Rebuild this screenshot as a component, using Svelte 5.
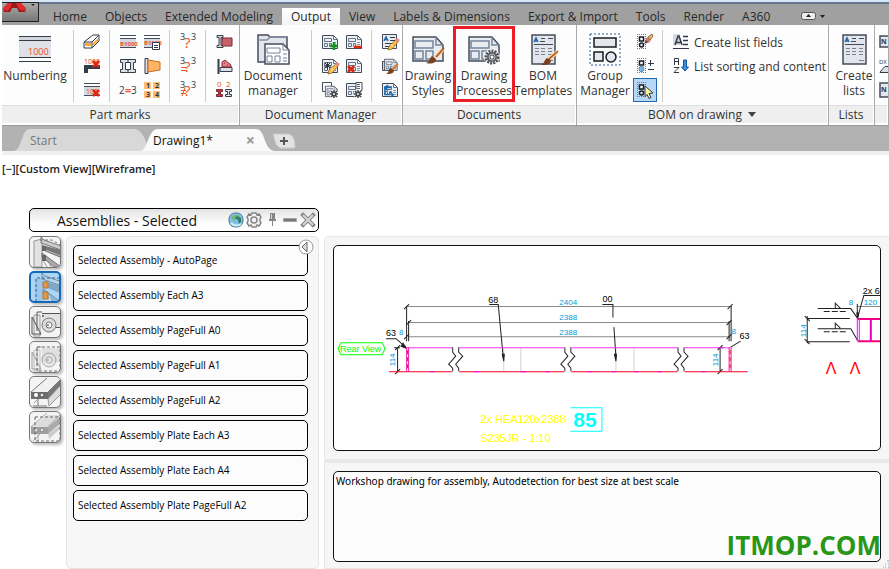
<script lang="ts">
	const sheet = '<path d="M.5 1.500h11l4 4v9H.5z" fill="#eceff3" stroke="#454c59"/><path d="M2.500 4.500h7v3h-7zM2.500 9.500h3v3h-3zM7.500 9.500h2v3h-2zM11.500 1.500v4h4" stroke="#68758a"/><path d="M11 8.500h3M11 10.500h3M11 12.500h3" stroke="#8a96a8"/>';
	const gearSmall = '<circle cx="12" cy="12" r="4.500" fill="#fff"/><path d="M12 8v8M8 12h8M9 9l6 6M15 9l-6 6" stroke="#3f4349" stroke-width="1.500"/><circle cx="12" cy="12" r="2.500" fill="#3f4349"/><circle cx="12" cy="12" r="1" fill="#fff"/>';
	const pencil = '<path d="M15 5l-8 7-1 4 4-1 7-8z" fill="#ffbf3d" stroke="#74512a" stroke-width=".7"/><path d="M9 10l2 3" stroke="#fff2c0"/><path d="M13 6l2-2 3 2-3 3z" fill="#e68c84"/>';
	const brush = '<path d="M16 6l-5 5" stroke="#d8742a" stroke-width="2"/><path d="M8 10l4 2c0 4-4 4-8 4 3-1 2-4 4-6z" fill="#7a401c"/>';
	const redX = '<path d="M6 7l6 6M12 7l-6 6" stroke="#e02810" stroke-width="2.500"/>';
	const beams = '<path d="M0 1.500h16M0 4.500h16M0 13.500h16" stroke="#454c59"/><path d="M0 5h16v8H0z" fill="#d5d9e1"/>';
	const iBeam = '<path d="M1 1.500h6v2H5v8h2v2H1v-2h2v-8H1z" fill="#dce0e7" stroke="#353c48"/>';
	const bigSheet = '<path d="M1 3h23l7 8v16H1z" fill="#e9ecf1" stroke="#454c59" stroke-width="1.500"/><path d="M3 7h18v7H3zM3 17h8v8H3zM14 17h7v8h-7zM24 3v8h7" stroke="#74849c" stroke-width="1.500"/>';
	const bigList = '<path d="M5 1h23v29H5z" fill="#e2e5eb" stroke="#454c59" stroke-width="1.500"/><path d="M7 8l2-4 2 4M8 7h3" stroke="#2567ae" stroke-width="1.500"/><path d="M14 4.500h4M13 7.500h5M21 4.500h5M7 10.500h19" stroke="#454c59"/><path d="M8 14.500h4M14 14.500h4M21 14.500h4M8 17.500h4M14 17.500h4M21 17.500h4M8 20.500h4M14 20.500h4M21 20.500h4M21 26.500h5" stroke="#7d828a"/>';
	const compareMarks = '<g fill="#303b4b" font-size="9"><text x="0" y="6">3</text><text x="11" y="6">3</text></g><text x="4" y="14" font-size="15" fill="#ed5422">?</text>';
	const group = '<path d="M0 .5h9M0 14.500h9M.5 0v15M8.500 0v15" stroke="#687a98" stroke-dasharray="1 1"/><path d="M2.500 3h4v4h-4z" fill="#fff" stroke="#171b22" stroke-width="1.500"/><circle cx="4.500" cy="11" r="2" fill="#e5e9f0" stroke="#171b22" stroke-width="1.500"/>';
	const crane = '<path d="M4 8h6v21H4z" fill="#ededed" stroke="#999"/><circle cx="19" cy="18" r="7" fill="#dcdcdc" stroke="#777"/><circle cx="19" cy="18" r="3" fill="#f6f6f6" stroke="#777"/><circle cx="18" cy="18" r="1" fill="#777"/>';

	const icons: Record<string, string> = {
		numbering: '<path d="M0 6h32v17H0z" fill="#dfe1e6"/><path d="M0 2.500h32M0 6.500h32M0 23.500h32M0 27.500h32" stroke="#343c49"/><path d="M0 3h32v3H0z" fill="#d3d6df"/><text x="9" y="21" font-size="9" fill="#ee4c17">1000</text>',
		eraser: '<path d="M0 8L9 1h6v6L8 14H0z" fill="#fff" stroke="#343c49"/><path d="M0 8h8l7-7M8 8v6" stroke="#343c49"/><path d="M1 9h6v3H1zM9 9l5-5v3l-5 5z" fill="#ffa63a"/>',
		clearNumber: '<text x="0" y="6" font-size="7" fill="#e14619">1000</text><path d="M2 15V9h14" stroke="#343c49" stroke-width="4"/><g transform="translate(3 -4)">' + redX + '</g>',
		removeNumber: beams + '<text x="2" y="12" font-size="7" fill="#e14619">100</text><g transform="translate(3 1)">' + redX + '</g>',
		mark: beams + '<text x="0" y="12" font-size="6" font-weight="bold" fill="#ed5422">B1000</text>',
		markList: beams + '<text x="0" y="11" font-size="6" font-weight="bold" fill="#ed5422">B1000</text><path d="M8.500 8.500h7v7h-7z" fill="#fff" stroke="#343c49"/><path d="M10 11.500h4M10 13.500h4" stroke="#343c49"/>',
		profiles: '<path d="M.5 1.500h15v3h-2v7h2v3H.5v-3h2v-7h-2z" fill="#dce0e7" stroke="#353c48"/><path d="M5.500 4.500h5v7h-5z" fill="#fff" stroke="#353c48"/><path d="M8 1v3M8 12v3" stroke="#353c48"/>',
		plate: '<path d="M1 .5h3v15H1z" fill="#dce0e7" stroke="#343c49"/><path d="M4 2l12 2v8L4 14z" fill="#ffb363" stroke="#c87022"/>',
		equal: '<text x="-1" y="12" font-size="10" fill="#303846">2</text><text x="5" y="12" font-size="11" font-weight="bold" fill="#ed5422">=</text><text x="11" y="12" font-size="10" fill="#303846">3</text>',
		numbers: '<path d="M0 0h7v7H0zM9 0h7v7H9zM0 9h7v7H0zM9 9h7v7H9z" fill="#ffbd73"/><g font-size="7" font-weight="bold" fill="#303846"><text x="2" y="6">1</text><text x="11" y="6">2</text><text x="2" y="15">3</text><text x="11" y="15">4</text></g>',
		compare: compareMarks,
		compareEqual: compareMarks + '<path d="M1 9.500h5M1 12.500h5" stroke="#ed5422"/>',
		compareDiff: compareMarks + '<path d="M1 8.500h5M1 11.500h5M5 6l-3 8" stroke="#ed5422"/>',
		flange: iBeam + '<path d="M6 4h10v8H6z" fill="#c9606a" stroke="#742d34"/>',
		cleat: '<path d="M2.500 1v15" stroke="#343c49" stroke-width="2"/><path d="M4 9.500h12v4H4z" fill="#dce0e7" stroke="#343c49"/><path d="M6 9V4l3-2 6 5v2z" fill="#dc828a" stroke="#8b2630"/><path d="M8 5h1M11 7h1" stroke="#8b2630"/>',
		beamNumbers: '<g font-size="8" fill="#ed5422"><text x="1" y="5">0</text><text x="10" y="5">2</text></g><path d="M.5 7.500h6v2h-2v3h2v2h-6v-2h2v-3h-2z" fill="#c93740" stroke="#762931"/><path d="M9.500 7.500h6v2h-2v3h2v2h-6v-2h2v-3h-2z" fill="#dce0e7" stroke="#353c48"/>',
		folder: '<path d="M1 28V1h10l2 2h17v25z" fill="#e2e5eb" stroke="#454c59" stroke-width="1.500"/><path d="M1 6h9l3-3h17" stroke="#8592a6" stroke-width="1.500"/><path d="M8 10h18l6 6v14H8z" fill="#fff" stroke="#454c59" stroke-width="1.500"/><path d="M10 14h13v5H10zM10 22h5v6h-5zM18 22h5v6h-5zM26 10v6h6M26 20h4M26 24h4M26 27h4" stroke="#74849c"/>',
		docAdd: sheet + '<path d="M12 8v8M8 12h8" stroke="#169222" stroke-width="2.500"/>',
		docMinus: sheet + '<path d="M8 13h8" stroke="#e02810" stroke-width="2.500"/>',
		docEdit: sheet + '<path d="M2 8h7M5.500 4.500v7M3 5l5 5M8 5l-5 5" stroke="#252c36"/>' + pencil,
		docDelete: sheet + '<g transform="translate(-4 1)">' + redX + '</g>',
		docsGear: '<path d="M.5.500h9v9h-9z" fill="#fff" stroke="#454c59"/><g transform="translate(3 3) scale(.8)">' + sheet + '</g>' + gearSmall,
		docGear: sheet + '<path d="M10 .5h6v8h-6z" fill="#fff" stroke="#454c59"/><path d="M11 2.500h3M11 4.500h3M11 6.500h3" stroke="#586579"/>' + gearSmall,
		textEdit: '<path d="M.5.500h14v14H.5z" fill="#e8ebf0" stroke="#454c59"/><path d="M2 7l2-4 2 4M3 5.500h3" stroke="#2567ae" stroke-width="1.500"/><path d="M8 3.500h5M8 6.500h5M3 9.500h7M3 12.500h4" stroke="#343c49"/>' + pencil,
		docBrush: '<path d="M.5 3.500h9v9h-9z" fill="#dce0e7" stroke="#454c59"/><g transform="translate(2 0) scale(.85)">' + sheet + '</g>' + brush,
		docSwap: sheet + '<path d="M9 5.500H3v7h5M6 3L3 5.500l3 3M8 10l3 3-3 2" stroke="#126db9" stroke-width="1.500"/>',
		drawingStyles: bigSheet + '<path d="M31 15l-7 8" stroke="#ffd09a" stroke-width="4"/><path d="M32 14l-8 9" stroke="#a64d1c" stroke-width="1.500"/><path d="M20 22l4 3c0 5-6 5-10 4 4-1 3-4 6-7z" fill="#7a401c"/>',
		drawingProcesses: bigSheet + '<circle cx="24" cy="23" r="8" fill="#fff"/><circle cx="24" cy="23" r="6" stroke="#50545a" stroke-width="3" stroke-dasharray="2 1"/><circle cx="24" cy="23" r="5" fill="#555960"/><circle cx="24" cy="23" r="3" stroke="#b9bec5"/><circle cx="24" cy="23" r="1.500" fill="#fff"/>',
		bomTemplates: bigList + '<path d="M30 18l-8 7" stroke="#ffd09a" stroke-width="4"/><path d="M31 17l-9 8" stroke="#a64d1c" stroke-width="1.500"/><path d="M20 24l4 2c0 5-6 5-10 5 4-2 3-5 6-7z" fill="#7a401c"/>',
		groupManager: '<path d="M1 0h30v31H1z" stroke="#2b5d9d" stroke-dasharray="2 2"/><path d="M5 4h22v9H5zM5 18h9v9H5z" fill="#e4e8ed" stroke="#171b22" stroke-width="1.500"/><circle cx="22" cy="23" r="5" fill="#e4e8ed" stroke="#171b22" stroke-width="1.500"/>',
		groupEdit: group + '<path d="M7 10l2-4 3 2z" fill="#43413a"/><path d="M8 5l3-2 3 3-2 3z" fill="#db7868"/><path d="M11 3l4-3 1 2-3 4z" fill="#e5bf5e" stroke="#8c7042"/>',
		groupItems: group + '<path d="M13.500 2v6M11 5.500h6M11 11.500h6" stroke="#303846"/><circle cx="4.500" cy="11" r="2.500" fill="#73b5ee"/>',
		groupPick: group + '<path d="M8 4l8 7-4 .5 2 4-2 1-2-4-2 2z" fill="#fff1a0" stroke="#303846"/>',
		listFields: '<path d="M0 0h7v11H0z" fill="#d4dae5"/><path d="M0 14.500h16" stroke="#303846"/><path d="M2 11L5 2h1l3 9M3 8.500h5" stroke="#303846" stroke-width="1.500"/><path d="M10 2.500h5M10 6.500h5M10 10.500h5" stroke="#303846" stroke-width="1.500"/>',
		listSort: '<path d="M1.500 7V.5h4V7M1 3.500h5M1 9.500h5l-5 5h5" stroke="#303846"/><path d="M10.500 2h3v7h2l-3.500 4-3.500-4h2z" fill="#3590df" stroke="#1853a3"/>',
		createLists: bigList,
		number: '<path d="M1 2h16v11H1z" fill="#e5e8ef" stroke="#454c59" stroke-width="1.500"/><text x="2" y="10" font-size="7" font-weight="bold" fill="#303846">N</text>',
		dx: '<text x="0" y="6" font-size="6" fill="#303846">DX</text><path d="M1 14.500h15v-3l-3-3H6l-3 3z" fill="#d8dce4" stroke="#343c49"/>',
		ncSettings: '<path d="M1 1h16v14H1z" fill="#e5e8ef" stroke="#454c59" stroke-width="1.500"/><text x="2" y="10" font-size="7" font-weight="bold" fill="#303846">N</text>',
		frame: '<path d="M4 4l8-2v28H4z" fill="#e2e2e2" stroke="#999"/><path d="M11 0v6l20 7V9L14 3z" fill="#ccc" stroke="#777"/><path d="M12 8l19 5v8l-19-8z" fill="#777"/><path d="M13 12l18 7" stroke="#bbb"/><path d="M12 16l19 14h-7L12 20z" fill="#aaa" stroke="#777"/><path d="M13 23l4 7M17 22l4 8" stroke="#999"/><path d="M12 9h4v5h-4zM12 18h4v6h-4z" fill="#666"/><path d="M10 3h12l8 5" stroke="#777" stroke-dasharray="3 2"/>',
		frameSelected: '<path d="M4 5h8v25H4z" fill="#9bc9ee"/><path d="M11 0v6l20 7V9L14 3z" fill="#b5d3e9" stroke="#6c8ea8"/><path d="M12 8l19 5v8l-19-8z" fill="#7fa8c6"/><path d="M12 16l19 14h-7L12 20z" fill="#91bada" stroke="#6c8ea8"/><path d="M13 23l4 7M17 22l4 8" stroke="#e5f2fb"/><path d="M12 9h5v6h-5zM12 19h5v7h-5z" fill="#e2994b" stroke="#b47331"/><path d="M5 29V5h25" stroke="#40617b" stroke-dasharray="3 2"/>',
		bracket: '<path d="M12 6h19v14H12z" fill="#e2e2e2"/><path d="M12 6.500h19M19 20.500h12" stroke="#555"/>' + crane + '<path d="M7 24V5h5M2 10v17h9z" stroke="#555"/><circle cx="13" cy="9" r="1" fill="#555"/>',
		bracketSelected: '<path d="M12 6h19v14H12z" fill="#e0e0e0"/><g opacity=".6">' + crane + '<path d="M7 24V5h5M2 10v17h9z" stroke="#666"/></g><path d="M7 5h23v24H7z" stroke="#707070" stroke-dasharray="3 2"/>',
		beam: '<path d="M1 15L17 1h14L18 15z" fill="#f1f1f1"/><path d="M18 15L31 2v6L18 22z" fill="#777"/><path d="M18 22L31 8v9L19 29z" fill="#ddd" stroke="#999"/><path d="M1 15h17v7H1z" fill="#6d6d6d"/><path d="M1 15L17 1M18 15L31 2M8 22v7M3 29h14" stroke="#777"/><path d="M4 26l4-4" stroke="#999"/><circle cx="6" cy="18" r="2" fill="#fff"/><circle cx="12" cy="18" r="2" fill="#eee" stroke="#555"/>',
		beamSelected: '<path d="M1 15L17 3h14L18 15z" fill="#ddd"/><path d="M18 15L31 4v7L18 22z" fill="#aaa"/><path d="M18 22l12-9v4L19 27z" fill="#ccc"/><path d="M1 15h17v7H1z" fill="#a0a0a0"/><path d="M1 15L17 1M8 22v7M3 29L31 2" stroke="#aaa"/><circle cx="6" cy="18" r="2" fill="#eee" stroke="#888"/><circle cx="12" cy="18" r="2" fill="#ddd" stroke="#888"/><path d="M5 5h25v24H5z" stroke="#686868" stroke-dasharray="3 2"/>',
		globe: '<rect x="1" y="1" width="14" height="14" rx="6" fill="#7fbfe2" stroke="#4b7896"/><path d="M3 5l4-2h4l1 2-2 2H8L7 9 4 7z" fill="#75b584"/><path d="M9 4l4 2v4l-2 2-1-4-3-2z" fill="#2f7f66"/><path d="M3 11c3 3 7 3 10 1" stroke="#d4eefa" stroke-width="2"/>',
		gear: '<path d="M6 1h4l1 2 2-1 2 3-1 2v2l1 2-2 3-2-1-1 2H6l-1-2-2 1-2-3 1-2V7L1 5l2-3 2 1z" fill="#f3f3f3" stroke="#858585" stroke-width="1.500"/><circle cx="8" cy="8" r="3" stroke="#858585" stroke-width="1.500"/>',
		pin: '<path d="M6 1h5v6h1v2H5V7h1z" fill="#858585"/><path d="M7 2h1v5H7z" fill="#d0d0d0"/><path d="M8.500 9v5" stroke="#888"/>',
		minus: '<path d="M1.500 6.500h13v3h-13z" fill="#777" stroke="#a3a3a3"/>',
		close: '<path d="M3 3l10 10M13 3L3 13" stroke="#858585" stroke-width="4" stroke-linecap="square"/><path d="M3 3l10 10M13 3L3 13" stroke="#d5d5d5" stroke-width="2"/>',
	};

	const menu = ['Home', 'Objects', 'Extended Modeling', 'Output', 'View', 'Labels & Dimensions', 'Export & Import', 'Tools', 'Render', 'A360'];
	const partIcons = [
		['eraser', 'clearNumber', 'removeNumber'],
		['mark', 'profiles', 'equal', 'markList', 'plate', 'numbers'],
		['compare', 'compareEqual', 'compareDiff'],
		['flange', 'cleat', 'beamNumbers'],
	];
	const managerIcons = [
		['docAdd', 'docEdit', 'docsGear', 'docMinus', 'docDelete', 'docGear'],
		['textEdit', 'docBrush', 'docSwap'],
	];
	const categories = ['frame', 'frameSelected', 'bracket', 'bracketSelected', 'beam', 'beamSelected'];
	const processes = [
		'Selected Assembly - AutoPage',
		'Selected Assembly Each A3',
		'Selected Assembly PageFull A0',
		'Selected Assembly PageFull A1',
		'Selected Assembly PageFull A2',
		'Selected Assembly Plate Each A3',
		'Selected Assembly Plate Each A4',
		'Selected Assembly Plate PageFull A2',
	];
	let activeMenu = $state('Output');
	let category = $state('frameSelected');
</script>

{#snippet icon(name: string, size: number)}
	<svg width={size} height={size} viewBox="0 0 {size} {size}" fill="none" aria-hidden="true">{@html icons[name]}</svg>
{/snippet}

{#snippet large(name: string, label: string, kind: string)}
	<button class="large {kind}">
		{@render icon(name, 32)}
		<span>{label}</span>
	</button>
{/snippet}

{#snippet tools(names: string[])}
	<div class="tools">
		{#each names as name}
			<button class="tool" class:picked={name === 'groupPick'} aria-label={name}>{@render icon(name, 16)}</button>
		{/each}
	</div>
{/snippet}

<div class="app">
	<header class="menu-bar">
		<button class="logo" aria-label="Application menu">
			<svg width="36" height="18" viewBox="0 0 36 18" aria-hidden="true">
				<path d="M1 6L6 0h12l6 6-1 3h-6l-2-4h-5L8 9H2z" fill="#9d161b" />
				<path d="M1 5L6 0h4L9 4 6 8 1 7zM14 0h5l5 5-1 3-5-1-3-4z" fill="#df2a2e" />
				<path d="M29 1h4l-2 2z" fill="#222" />
			</svg>
		</button>
		<nav>
			{#each menu as item}
				<button class="menu-item" class:active={activeMenu === item} onclick={() => activeMenu = item}>{item}</button>
			{/each}
		</nav>
		<button class="collapse" aria-label="Minimize ribbon">
			<svg width="26" height="10" viewBox="0 0 26 10" aria-hidden="true">
				<rect x=".5" y="1.500" width="14" height="7" rx="2" fill="#eee" stroke="#555" />
				<path d="M5 6l2.500-3L10 6zM19 4h5l-2.500 3z" fill="#222" />
			</svg>
		</button>
	</header>

	<section class="ribbon">
		<div class="group">
			<div class="group-body">
				{@render large('numbering', 'Numbering', 'wide')}
				{#each partIcons as names}
					<i class="rule"></i>
					{@render tools(names)}
				{/each}
			</div>
			<div class="group-title">Part marks</div>
		</div>
		<div class="group">
			<div class="group-body">
				{@render large('folder', 'Document manager', 'wide')}
				{#each managerIcons as names}
					<i class="rule"></i>
					{@render tools(names)}
				{/each}
			</div>
			<div class="group-title">Document Manager</div>
		</div>
		<div class="group">
			<div class="group-body">
				{@render large('drawingStyles', 'Drawing Styles', 'narrow')}
				{@render large('drawingProcesses', 'Drawing Processes', 'marked')}
				{@render large('bomTemplates', 'BOM Templates', 'medium')}
			</div>
			<div class="group-title">Documents</div>
		</div>
		<div class="group">
			<div class="group-body">
				{@render large('groupManager', 'Group Manager', 'medium')}
				{@render tools(['groupEdit', 'groupItems', 'groupPick'])}
				<i class="rule"></i>
				<div class="list-tools">
					<button>{@render icon('listFields', 16)}Create list fields</button>
					<button>{@render icon('listSort', 16)}List sorting and content</button>
				</div>
			</div>
			<div class="group-title">BOM on drawing <span class="caret"></span></div>
		</div>
		<div class="group">
			<div class="group-body">{@render large('createLists', 'Create lists', 'narrow')}</div>
			<div class="group-title">Lists</div>
		</div>
		<div class="group">
			<div class="group-body">{@render tools(['number', 'dx', 'ncSettings'])}</div>
			<div class="group-title"></div>
		</div>
	</section>

	<div class="file-tabs">
		<button class="file-tab">
			<svg viewBox="0 0 134 22" preserveAspectRatio="none" aria-hidden="true"><path d="M0 22C8 21 7 0 16 0H120C128 0 132 12 133 16L134 22z" fill="#d8d8d8" /></svg>
			<span>Start</span>
		</button>
		<button class="file-tab current">
			<svg viewBox="0 0 134 22" preserveAspectRatio="none" aria-hidden="true"><path d="M0 22C7 20 7 0 17 0H114C126 0 121 20 134 22z" fill="#fafafa" /></svg>
			<span>Drawing1*</span><b>×</b>
		</button>
		<button class="file-add" aria-label="New drawing">
			<svg width="24" height="16" viewBox="0 0 24 16" aria-hidden="true">
				<path d="M1 1h15c6 1 7 7 7 14H9C4 14 3 8 1 1z" fill="#e3e3e3" stroke="#c9c9c9" />
				<path d="M12 4v8M8 8h8" stroke="#555" stroke-width="2" />
			</svg>
		</button>
	</div>

	<main>
		<div class="view-label">[−][Custom View][Wireframe]</div>
		<div class="palette">
			<aside>
				<header class="palette-title">
					<h1>Assemblies - Selected</h1>
					{#each ['globe', 'gear', 'pin', 'minus', 'close'] as name}
						<button aria-label={name}>{@render icon(name, 16)}</button>
					{/each}
				</header>
				<div class="palette-body">
					<div class="categories">
						{#each categories as name}
							<button class:chosen={category === name} onclick={() => category = name} aria-label={name}>{@render icon(name, 32)}</button>
						{/each}
					</div>
					<div class="process-list">
						{#each processes as process}
							<button class="process">{process}</button>
						{/each}
						<button class="back" aria-label="Hide list">
							<svg width="16" height="16" viewBox="0 0 16 16" aria-hidden="true">
								<circle cx="8" cy="8" r="7" fill="#fff" stroke="#999" />
								<path d="M9 3v10L4 8z" fill="#ddd" stroke="#666" />
							</svg>
						</button>
					</div>
				</div>
			</aside>

			<div class="details">
				<section class="preview-panel">
					<div class="preview">
						<svg viewBox="334 246 546 204" preserveAspectRatio="xMinYMin slice" fill="none" role="img" aria-label="Assembly drawing">
							<g stroke="#8a8a8a">
								<path d="M406 306.500h324M408 322.500h320M408 336.500h321M856 306.500h24" />
								<path d="M503.500 348v23M520.500 348v23M615.500 348v23M633.500 348v23" stroke="#d2d2d2" />
							</g>
							<g stroke="#222">
								<path d="M406.500 306v35M408.500 321v20M730.500 306v35M728.500 321v20" />
								<path d="M404 309l5-5M406 325l5-5M404 339l5-5M727 309l5-5M726 325l5-5M726 339l5-5" />
								<path d="M397.500 347v25M395 350l5-5M395 374l5-5M394 347.500h6M719.500 347v25M717 350l5-5M717 374l5-5M717 347.500h6" />
								<path d="M489 304.500h9l5 53M602 304.500h10.500v13M613.500 327l2 30M386 338.500h10l10 9M740 341l-10 6" />
								<path d="M452.500 347v5l3 4-7 8 4 4v3M458.500 347v5l4 4-7 8 3 4v3M564.500 347v5l3 4-7 8 4 4v3M570.500 347v5l4 4-7 8 3 4v3M677.500 347v5l3 4-7 8 4 4v3M683.500 347v5l4 4-7 8 3 4v3" />
								<path d="M806.500 316v27M806 318.500h43M806 341.500h43M804 316l5 5M804 339l5 5" />
								<path d="M817 308.500h33l7 10M834.500 308v-5l5 5M817 328.500h33l7 12M834.500 328v-5l5 5M880 295.500h-17l-6 21M856.500 304v14" />
								<path d="M823 311.500h22M823 331.500h22" stroke-dasharray="6 2" />
								<path d="M502 354h2l-.5 7zM614 354h2l-.5 7zM403 343l3 5-5-2zM856 313h2l-1 5z" fill="#222" />
							</g>
							<path d="M406 347.500h46M459 347.500h105M571 347.500h106M684 347.500h46" stroke="#f3f" />
							<path d="M389 371.500h63M459 371.500h105M571 371.500h106M684 371.500h63" stroke="#f00020" />
							<path d="M430 371.500h4M474 371.500h5M520 371.500h6M545 371.500h4M587 371.500h5M611 371.500h4M634 371.500h4M657 371.500h4M701 371.500h4" stroke="#f0f" />
							<path d="M406.500 347v24M408.500 347v24M728.500 347v24M730.500 347v24" stroke="#f01ca8" />
							<path d="M407.500 350v20M729.500 350v20" stroke="#f00020" stroke-dasharray="4 3" />
							<path d="M857 319h23M857 341h23" stroke="#f00080" stroke-width="2" />
							<path d="M856.500 318v23M858.500 318v23" stroke="#f0f" />
							<path d="M870 319v22" stroke="#e000c0" stroke-width="2" />
							<path d="M341 342.500h41l3 6-3 6h-41l-3-6z" stroke="#0f0" />
							<text class="green" x="340" y="352">Rear View</text>
							<g class="dimension">
								<text x="559" y="305">2404</text><text x="559" y="320">2388</text><text x="559" y="335">2388</text>
								<text x="399" y="335">8</text><text x="731" y="334">8</text><text x="848" y="305">8</text><text x="863" y="305">120</text>
								<text transform="translate(395 366) rotate(-90)">114</text><text transform="translate(717 366) rotate(-90)">114</text><text transform="translate(805 337) rotate(-90)">114</text>
							</g>
							<g class="position">
								<text x="488" y="303">68</text><text x="602" y="302">00</text><text x="386" y="336">63</text><text x="739" y="339">63</text><text x="862" y="294">2x 6</text>
							</g>
							<g class="section"><text x="825" y="374">Λ</text><text x="849" y="374">Λ</text></g>
							<g class="material"><text x="480" y="423">2x HEA120x2388</text><text x="480" y="442">S235JR - 1:10</text></g>
							<path d="M570 407.500h31.500v23.500H570" stroke="#0ff" />
							<text class="quantity" x="573" y="427">85</text>
						</svg>
					</div>
				</section>
				<section class="note-panel">
					<div class="note">Workshop drawing for assembly, Autodetection for best size at best scale</div>
					<div class="watermark">ITMOP.COM</div>
					<svg class="grip" width="6" height="8" viewBox="0 0 6 8" aria-hidden="true"><path d="M4 1h2M2 4h1M5 4h1M0 7h1M2 7h1M5 7h1" stroke="#91a2c5" /></svg>
				</section>
			</div>
		</div>
	</main>
</div>

<style>
	:global(body) {
		margin: 0;
		background: #fff;
	}
	.app {
		height: 100vh;
		display: flex;
		flex-direction: column;
		overflow: hidden;
		box-sizing: border-box;
		padding-left: 2px;
		font: 12px/15px "Open Sans", "Noto Sans", sans-serif;
		color: #333;
	}
	button {
		padding: 0;
		border: 0;
		background: none;
		font: inherit;
		color: inherit;
	}
	svg {
		display: block;
		flex: none;
	}
	.menu-bar {
		height: 25px;
		flex: none;
		display: flex;
		align-items: flex-end;
		box-sizing: border-box;
		border-top: 2px solid #d7e7f6;
		background: linear-gradient(#65788d 0 2px, #a0a0a0 2px);
	}
	.logo {
		align-self: flex-start;
		height: 20px;
		border: 1px solid #222;
		border-width: 1px 1px 1px 0;
		background: linear-gradient(#aaa, #777);
	}
	nav {
		display: flex;
		margin-left: 5px;
	}
	.menu-item {
		height: 17px;
		padding: 0 9px;
		white-space: nowrap;
		color: #292929;
	}
	.menu-item.active {
		background: linear-gradient(#fff, #f3f3f3);
	}
	.collapse {
		margin: 0 0 4px 22px;
	}
	.ribbon {
		flex: none;
		display: grid;
		grid-template-columns: 238fr 163fr 174fr 252fr 46fr 14fr;
		height: 100px;
		border-bottom: 1px solid #999;
		overflow: hidden;
	}
	.group {
		min-width: 0;
		display: flex;
		flex-direction: column;
		border-right: 1px solid #aaa;
		padding-right: 1px;
		overflow: hidden;
	}
	.group-body {
		flex: 1;
		display: flex;
		background: #fdfdfd;
	}
	.group-title {
		height: 17px;
		margin-bottom: 2px;
		display: flex;
		align-items: center;
		justify-content: center;
		gap: 6px;
		border-top: 1px solid #ddd;
		background: #efefef;
	}
	.large {
		flex: none;
		display: flex;
		flex-direction: column;
		align-items: center;
		box-sizing: border-box;
		padding-top: 9px;
		gap: 2px;
	}
	.large span {
		width: min-content;
	}
	.wide {
		width: 66px;
	}
	.narrow {
		width: 50px;
	}
	.medium {
		width: 56px;
	}
	.marked {
		width: 62px;
		height: 76px;
		margin-top: 1px;
		padding-top: 5px;
		border: 3px solid #ee1c25;
	}
	.large :global(svg),
	.tool :global(svg) {
		overflow: visible;
	}
	.rule {
		flex: none;
		width: 1px;
		margin: 5px 6px 3px 5px;
		background: #ccc;
	}
	.tools {
		flex: none;
		display: grid;
		grid-auto-flow: column;
		grid-template-rows: repeat(3, 24px);
		grid-auto-columns: 24px;
		padding-top: 5px;
	}
	.tool {
		display: grid;
		place-items: center;
	}
	.picked {
		border: 1px solid #2469ad;
		background: #b6d7f5;
	}
	.list-tools {
		padding: 5px 0 0 4px;
	}
	.list-tools button {
		height: 24px;
		display: flex;
		align-items: center;
		gap: 5px;
		white-space: nowrap;
	}
	.caret {
		border: 4px solid transparent;
		border-top: 5px solid #444;
		border-bottom: 0;
	}
	.file-tabs {
		flex: none;
		height: 25px;
		display: flex;
		align-items: flex-end;
		padding-left: 12px;
		border-bottom: 4px solid #f0f0f0;
		background: #b2b2b2;
	}
	.file-tab {
		position: relative;
		height: 22px;
		width: 134px;
		padding: 0 16px;
		display: flex;
		align-items: center;
		justify-content: space-between;
		color: #777;
	}
	.file-tab svg {
		position: absolute;
		inset: 0;
		width: 100%;
		height: 100%;
	}
	.file-tab span,
	.file-tab b {
		position: relative;
	}
	.current {
		margin-left: -7px;
		padding: 0 20px 0 12px;
		color: #111;
	}
	.file-tab b {
		font-size: 16px;
		color: #999;
	}
	.file-add {
		margin: 0 0 2px -3px;
	}
	main {
		flex: 1;
		min-height: 0;
		display: flex;
		flex-direction: column;
	}
	.view-label {
		padding: 6px 0 32px;
		font-size: 11px;
		font-weight: 600;
		color: #222;
	}
	.palette {
		flex: 1;
		min-height: 0;
		display: grid;
		grid-template-columns: 290px 1fr;
		gap: 5px;
		padding-left: 27px;
	}
	aside {
		min-height: 0;
		display: flex;
		flex-direction: column;
	}
	.palette-title {
		height: 24px;
		flex: none;
		display: flex;
		align-items: center;
		gap: 2px;
		box-sizing: border-box;
		padding-right: 2px;
		border: 1px solid #000;
		border-radius: 5px;
		background: linear-gradient(#e3e3e3, #fff 70%);
	}
	h1 {
		flex: 1;
		margin: 0;
		padding-left: 27px;
		font-size: 14px;
		font-weight: 400;
		color: #111;
	}
	.palette-body {
		flex: 1;
		min-height: 0;
		display: flex;
		gap: 5px;
		padding-top: 4px;
	}
	.categories {
		display: flex;
		flex-direction: column;
		gap: 3px;
	}
	.categories button {
		width: 32px;
		height: 32px;
		display: grid;
		place-items: center;
		box-sizing: border-box;
		border: 1px solid #777;
		border-radius: 5px;
		background: #f4f4f4;
		box-shadow: 2px 2px 3px #bbb;
		overflow: hidden;
	}
	.categories .chosen {
		border: 2px solid #1768b6;
		background: #acd6f7;
	}
	.process-list {
		position: relative;
		flex: 1;
		display: flex;
		flex-direction: column;
		gap: 4px;
		padding: 8px 10px 0 6px;
		border: 1px solid #e4e4e4;
		border-radius: 5px;
		background: #f7f7f7;
	}
	.process {
		height: 31px;
		flex: none;
		padding-left: 4px;
		border: 1px solid #000;
		border-radius: 5px;
		background: #fcfcfc;
		font-size: 10px;
		text-align: left;
		color: #000;
	}
	.back {
		position: absolute;
		top: 2px;
		right: 4px;
	}
	.details {
		min-width: 0;
		min-height: 0;
		display: flex;
		flex-direction: column;
		padding-top: 28px;
	}
	.preview-panel,
	.note-panel {
		position: relative;
		display: flex;
		padding: 8px;
		border: 1px solid #e8e8e8;
		border-right: 0;
		background: #f6f6f6;
	}
	.preview-panel {
		flex: 207;
		min-height: 0;
		border-radius: 5px 0 0 0;
	}
	.note-panel {
		flex: 91;
		min-height: 0;
		border-top-width: 3px;
		padding-bottom: 6px;
	}
	.preview,
	.note {
		flex: 1;
		min-width: 0;
		box-sizing: border-box;
		border: 1px solid #111;
		border-radius: 5px;
		background: #fff;
		overflow: hidden;
	}
	.preview svg {
		width: 100%;
		height: 100%;
	}
	.preview text {
		font-family: "Liberation Sans", Arial, sans-serif;
	}
	.dimension {
		font-size: 8px;
		fill: #0099d8;
	}
	.position {
		font-size: 9px;
		fill: #000;
	}
	.green {
		font-size: 9px;
		fill: #0f0;
	}
	.section {
		font-size: 16px;
		fill: #f00;
	}
	.material {
		font-size: 11px;
		fill: #ff0;
	}
	.quantity {
		font-size: 21px;
		font-weight: bold;
		fill: #0ff;
	}
	.note {
		padding: 2px;
		background: #fcfcfc;
		font-family: "Noto Sans", sans-serif;
		font-size: 10px;
		color: #000;
	}
	.watermark {
		position: absolute;
		right: 8px;
		bottom: 8px;
		font-size: 26px;
		line-height: 30px;
		font-weight: 700;
		color: #2a9618;
	}
	.grip {
		position: absolute;
		right: 0;
		bottom: 0;
	}
</style>
